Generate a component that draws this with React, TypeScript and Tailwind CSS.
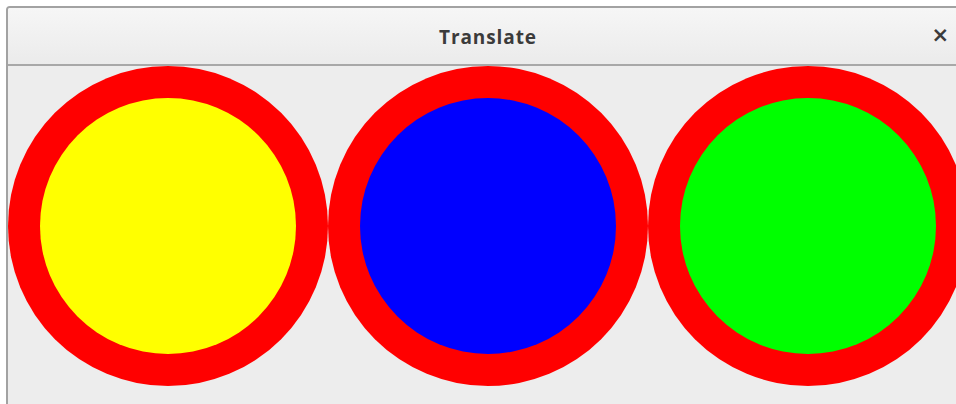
const circles = ['bg-[#ffff00]', 'bg-[#0000ff]', 'bg-[#00ff00]']

export default function App() {
  return (
    <div className="w-[956px] h-[404px] overflow-hidden bg-white pl-[6px] pt-[6px]">
      <div className="w-[964px] h-[420px] border-2 border-[#a2a2a2] rounded-tl-[4px] bg-[#ededed] overflow-hidden">
        {/* Title bar */}
        <div className="relative h-[58px] border-b-2 border-[#a8a8a8] bg-gradient-to-b from-[#f6f6f6] to-[#ebebeb] flex items-center justify-center pt-[3px]">
          <span className="text-[19px] font-bold text-[#3b3b3b] font-['Open_Sans',sans-serif] tracking-[0.9px]">
            Translate
          </span>
          <span className="absolute right-[19px] top-[17px] text-[21px] font-bold text-[#3b3b3b] font-['DejaVu_Sans',sans-serif] leading-none">
            ×
          </span>
        </div>
        {/* Content */}
        <div className="flex">
          {circles.map((c) => (
            <div
              key={c}
              className="w-[320px] h-[320px] shrink-0 rounded-full bg-[#ff0000] flex items-center justify-center"
            >
              <div className={`w-[256px] h-[256px] rounded-full ${c}`} />
            </div>
          ))}
        </div>
      </div>
    </div>
  )
}
